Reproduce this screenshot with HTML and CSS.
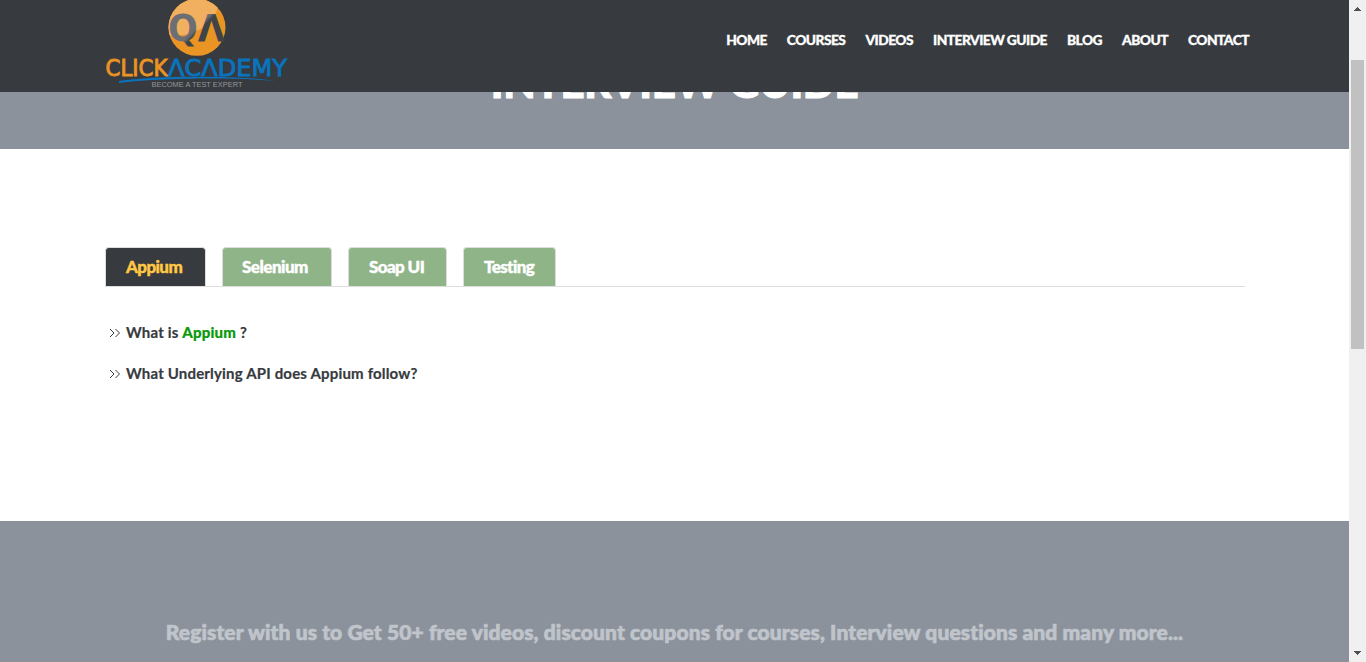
FILE: index.html
```html
<!DOCTYPE html>
<html lang="en">
<head>
<meta charset="utf-8">
<title>Interview Guide</title>
<link rel="stylesheet" href="styles.css">
</head>
<body>
<div class="viewport">
  <div class="page">
    <header class="header">
      <a class="logo">
        <svg width="184" height="92" viewBox="0 0 184 92">
          <defs>
            <clipPath id="disc"><circle cx="91" cy="27.300" r="28.500"/></clipPath>
            <linearGradient id="ink" gradientUnits="userSpaceOnUse" x1="86" y1="20" x2="104" y2="38"><stop offset=".35" stop-color="#6d6e73"/><stop offset=".5" stop-color="#404348"/></linearGradient>
          </defs>
          <circle cx="91" cy="27.300" r="28.500" fill="#ea9424"/>
          <path clip-path="url(#disc)" d="M62-2h51c0 22-19 39-51 38z" fill="#f0b060"/>
          <text class="mark" x="62" y="41" textLength="57" lengthAdjust="spacingAndGlyphs">QΛ</text>
          <text class="word orange" x="-0.500" y="76" textLength="62" lengthAdjust="spacingAndGlyphs">CLICK</text>
          <text class="word blue" x="62" y="76" textLength="119" lengthAdjust="spacingAndGlyphs">ΛCΛDEMY</text>
          <path d="M13 81C48 76 128 75 170 81C128 77 48 78 13 83z" fill="#0a73bd"/>
          <text class="tagline" x="45.500" y="87" textLength="91" lengthAdjust="spacingAndGlyphs">BECOME A TEST EXPERT</text>
        </svg>
      </a>
      <nav class="nav">
        <a>HOME</a><a>COURSES</a><a>VIDEOS</a><a>INTERVIEW GUIDE</a><a>BLOG</a><a>ABOUT</a><a>CONTACT</a>
      </nav>
    </header>
    <section class="hero"><h1>INTERVIEW GUIDE</h1></section>
    <main class="content">
      <div class="tabs">
        <a class="tab appium active">Appium</a><a class="tab selenium">Selenium</a><a class="tab soap">Soap UI</a><a class="tab testing">Testing</a>
      </div>
      <ul class="questions">
        <li><svg class="chev" width="12" height="10" viewBox="0 0 12 10"><path d="M1 1l4 4-4 4M6.500 1l4 4-4 4"/></svg><span>What is <b class="term">Appium</b> ?</span></li>
        <li><svg class="chev" width="12" height="10" viewBox="0 0 12 10"><path d="M1 1l4 4-4 4M6.500 1l4 4-4 4"/></svg><span>What Underlying API does Appium follow?</span></li>
      </ul>
    </main>
    <section class="register"><h2>Register with us to Get 50+ free videos, discount coupons for courses, Interview questions and many more...</h2></section>
  </div>
  <div class="scrollbar">
    <svg width="7" height="4" viewBox="0 0 7 4" shape-rendering="crispEdges"><path d="M3 0h1v1h1v1h1v1h1v1H0V3h1V2h1V1h1z"/></svg>
    <div class="thumb"></div>
    <svg width="7" height="4" viewBox="0 0 7 4" shape-rendering="crispEdges"><path d="M0 0h7v1H6v1H5v1H4v1H3V3H2V2H1V1H0z"/></svg>
  </div>
</div>
</body>
</html>
```
FILE: styles.css
```css
* { box-sizing: border-box; }
body { margin: 0; overflow: hidden; background: #fff; font-family: Lato, sans-serif; color: #373a3e; }
.viewport { display: flex; height: 662px; overflow: hidden; }
.page { width: 1349px; flex: none; }
.header { position: fixed; top: 0; left: 0; z-index: 2; width: 1349px; height: 92px; padding: 0 90px 0 106px; background: #373a3e; display: flex; justify-content: space-between; }
.logo { height: 92px; }
.logo svg { display: block; }
.mark { font: 700 38px "DejaVu Sans", sans-serif; fill: url(#ink); }
.word { font: 400 22.5px "DejaVu Sans", sans-serif; stroke-width: 0.9; }
.orange { fill: #ea9424; stroke: #ea9424; }
.blue { fill: #0a73bd; stroke: #0a73bd; }
.tagline { font: 400 7.8px "Liberation Sans", sans-serif; fill: #95979a; }
.nav { display: flex; height: 80px; align-items: center; }
.nav a { padding: 0 10px; color: #fff; font-family: "Lato Black", Lato, sans-serif; font-size: 13.8px; font-weight: 900; letter-spacing: -0.55px; line-height: 20px; white-space: nowrap; -webkit-text-stroke: 0.3px #fff; }
.hero { height: 149px; padding-top: 57px; background: #8b929b; }
.hero h1 { margin: 0; text-align: center; color: #fff; font-family: "Lato Black", Lato, sans-serif; font-size: 42px; font-weight: 900; letter-spacing: -0.3px; line-height: 50px; -webkit-text-stroke: 1px #fff; }
.content { height: 372px; padding: 98px 104px 0 105px; }
.tabs { display: flex; gap: 16px; height: 40px; border-bottom: 1px solid #ddd; }
.tab { height: 39px; padding: 0 0 0 20px; border: 1px solid #ddd; border-bottom: 0; border-radius: 4px 4px 0 0; background: #8fb488; color: #fff; font-family: "Lato Black", Lato, sans-serif; font-size: 17px; font-weight: 900; letter-spacing: -0.6px; line-height: 38px; white-space: nowrap; -webkit-text-stroke: 0.4px currentColor; }
.appium { width: 101px; }
.selenium { width: 110px; padding-left: 19px; letter-spacing: -0.5px; }
.soap { width: 99px; }
.testing { width: 93px; }
.tab.active { background: #373a3e; color: #ffc845; }
.questions { margin: 0; padding: 25px 0 0 4px; list-style: none; font-size: 15px; font-weight: 700; letter-spacing: 0.18px; }
.questions li { display: flex; align-items: center; gap: 5px; height: 41px; }
.questions span { padding-bottom: 2px; -webkit-text-stroke: 0.2px currentColor; }
.chev { fill: none; stroke: #373a3e; stroke-width: 1; }
.term { color: #0a9b0a; }
.register { height: 141px; padding-top: 95px; background: #8b929b; }
.register h2 { margin: 0; color: #c0c4cb; text-align: center; font-family: "Lato Black", Lato, sans-serif; font-size: 21px; font-weight: 900; letter-spacing: 0.1px; line-height: 31px; white-space: nowrap; -webkit-text-stroke: 0.7px #c0c4cb; }
.scrollbar { width: 17px; height: 662px; padding: 7px 0; background: #f0f0f0; display: flex; flex-direction: column; align-items: center; fill: #505050; }
.thumb { width: 13px; height: 289px; margin: 49px 0 auto; background: #c1c1c1; }
```
